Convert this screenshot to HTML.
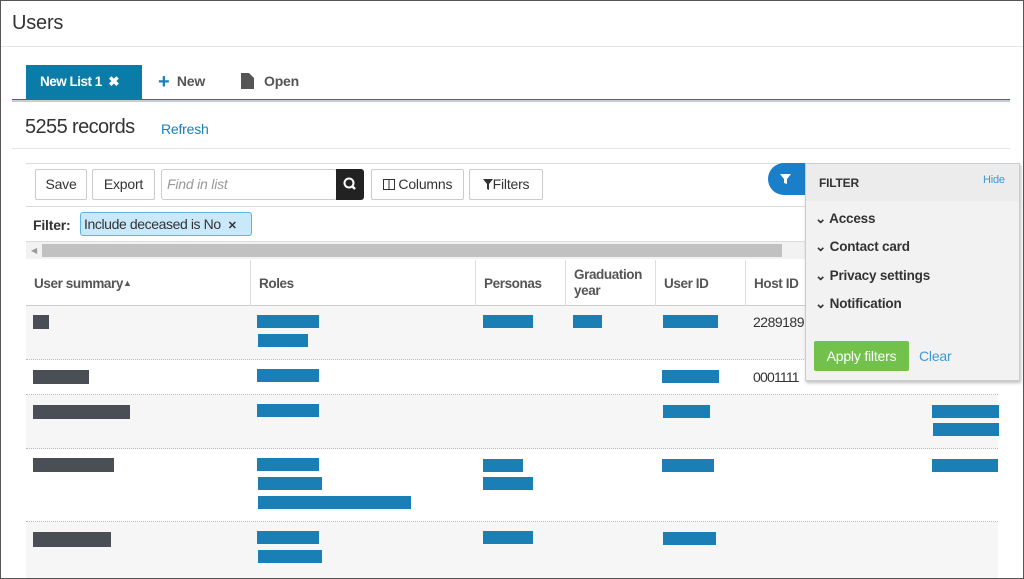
<!DOCTYPE html>
<html><head><style>
*{margin:0;padding:0;box-sizing:border-box}
body{width:1024px;height:579px;overflow:hidden;background:#fff;font-family:"Liberation Sans",sans-serif;position:relative;color:#333;letter-spacing:-0.2px}
.frame{position:absolute;left:0;top:0;width:1024px;height:579px;border:1px solid #555;z-index:50;pointer-events:none}
.a{position:absolute;white-space:nowrap}
.bar{position:absolute;height:13px;background:#1a7fb5}
.gbar{position:absolute;height:14px;background:#4a4f55}
.btn{position:absolute;top:169px;height:31px;border:1px solid #ccc;border-radius:2px;background:#fff;font-size:14px;line-height:29px;text-align:center;color:#333;white-space:nowrap}
.hd{position:absolute;top:260px;height:46px;font-weight:bold;font-size:13.5px;color:#555;border-left:1px solid #ddd;padding:7px 8px;display:flex;align-items:center;white-space:nowrap;letter-spacing:-0.4px}
.row{position:absolute;left:26px;width:972px;border-bottom:1px dotted #bbb}
.fi{position:absolute;left:815px;font-weight:bold;font-size:13.5px;color:#333;white-space:nowrap}
</style></head><body>
<div class="frame"></div>
<div class="a" style="left:12px;top:12px;font-size:20px;color:#333">Users</div>
<div class="a" style="left:1px;top:46px;width:1022px;height:1px;background:#e5e5e5"></div>

<div class="a" style="left:26px;top:65px;width:116px;height:34px;background:#0b7ca8;color:#fff;font-weight:bold;font-size:13.5px;line-height:34px;padding-left:14px;letter-spacing:-0.5px">New List 1 &nbsp;✖</div>
<div class="a" style="left:158px;top:73px;font-size:14px;font-weight:bold;color:#555"><span style="color:#1a7fb5;font-size:20px;line-height:16px;vertical-align:-2px">+</span>&nbsp; New</div>
<svg class="a" style="left:241px;top:73px" width="13" height="16"><path d="M0 0H8L13 5V16H0Z" fill="#555"/></svg>
<div class="a" style="left:264px;top:73px;font-size:14px;font-weight:bold;color:#555">Open</div>
<div class="a" style="left:12px;top:99px;width:998px;height:3px;background:#ccc;border-top:1px solid #0b7ca8"></div>

<div class="a" style="left:25px;top:116px;font-size:20px;color:#333;letter-spacing:-0.6px">5255 records</div>
<div class="a" style="left:161px;top:121px;font-size:14px;color:#1a7fb5">Refresh</div>
<div class="a" style="left:12px;top:148px;width:998px;height:1px;background:#e5e5e5"></div>

<div class="a" style="left:26px;top:163px;width:780px;height:1px;background:#ddd"></div>
<div class="btn" style="left:35px;width:52px">Save</div>
<div class="btn" style="left:92px;width:63px">Export</div>
<div class="btn" style="left:161px;width:176px;text-align:left;padding-left:5px;font-style:italic;color:#999;border-radius:3px">Find in list</div>
<div class="a" style="left:336px;top:169px;width:28px;height:31px;background:#222;border-radius:0 3px 3px 0"><svg width="28" height="31"><circle cx="13" cy="14" r="4.5" stroke="#fff" stroke-width="2" fill="none"/><path d="M16 17L19 20" stroke="#fff" stroke-width="2.5"/></svg></div>
<div class="btn" style="left:371px;width:93px"><svg width="12" height="11" style="vertical-align:-1px"><rect x="0.5" y="0.5" width="11" height="10" fill="none" stroke="#333"/><path d="M6 0V11" stroke="#333"/></svg> Columns</div>
<div class="btn" style="left:469px;width:74px"><svg width="10" height="11" style="vertical-align:-1px"><path d="M0 0H10L6 5V11L4 10V5Z" fill="#333"/></svg>Filters</div>
<div class="a" style="left:26px;top:206px;width:780px;height:1px;background:#ddd"></div>
<div class="a" style="left:768px;top:163px;width:40px;height:32px;background:#1a7fc8;border-radius:16px 0 0 16px"><svg width="40" height="32"><path d="M12 11H23L19 16V21L16 20V16Z" fill="#fff"/></svg></div>

<div class="a" style="left:33px;top:217px;font-size:14px;font-weight:bold;color:#333">Filter:</div>
<div class="a" style="left:80px;top:212px;width:172px;height:24px;background:#c9e9fa;border:1px solid #5bb5e5;border-radius:3px;font-size:14px;line-height:22px;padding-left:3px;color:#333;letter-spacing:-0.4px">Include deceased is No &nbsp;<b style="font-size:11px">✕</b></div>
<div class="a" style="left:26px;top:241px;width:780px;height:18px;background:#f2f2f2;border-top:1px solid #ddd"></div>
<div class="a" style="left:31px;top:246px;font-size:8px;color:#999">◀</div>
<div class="a" style="left:42px;top:244px;width:740px;height:13px;background:#c1c1c1"></div>

<div class="a" style="left:26px;top:305px;width:972px;height:1px;background:#ccc"></div>
<div class="hd" style="left:26px;width:224px;border-left:none">User summary <span style="font-size:9px">▲</span></div>
<div class="hd" style="left:250px;width:225px">Roles</div>
<div class="hd" style="left:475px;width:90px">Personas</div>
<div class="hd" style="left:565px;width:90px;line-height:16px">Graduation<br>year</div>
<div class="hd" style="left:655px;width:90px">User ID</div>
<div class="hd" style="left:745px;width:60px">Host ID</div>

<div class="row" style="top:306px;height:54px;background:#f6f6f6"></div>
<div class="row" style="top:360px;height:35px"></div>
<div class="row" style="top:395px;height:54px;background:#f6f6f6"></div>
<div class="row" style="top:449px;height:73px"></div>
<div class="row" style="top:522px;height:57px;background:#f6f6f6"></div>

<div class="gbar" style="left:33px;top:315px;width:16px"></div>
<div class="bar" style="left:257px;top:315px;width:62px"></div>
<div class="bar" style="left:258px;top:334px;width:50px"></div>
<div class="bar" style="left:483px;top:315px;width:50px"></div>
<div class="bar" style="left:573px;top:315px;width:29px"></div>
<div class="bar" style="left:663px;top:315px;width:55px"></div>
<div class="a" style="left:753px;top:314px;font-size:14px;color:#333;letter-spacing:-0.5px">2289189</div>

<div class="gbar" style="left:33px;top:370px;width:56px"></div>
<div class="bar" style="left:257px;top:369px;width:62px"></div>
<div class="bar" style="left:662px;top:370px;width:57px"></div>
<div class="a" style="left:753px;top:369px;font-size:14px;color:#333;letter-spacing:-0.8px">0001111</div>

<div class="gbar" style="left:33px;top:405px;width:97px"></div>
<div class="bar" style="left:257px;top:404px;width:62px"></div>
<div class="bar" style="left:663px;top:405px;width:47px"></div>
<div class="bar" style="left:932px;top:405px;width:67px"></div>
<div class="bar" style="left:933px;top:423px;width:66px"></div>

<div class="gbar" style="left:33px;top:458px;width:81px"></div>
<div class="bar" style="left:257px;top:458px;width:62px"></div>
<div class="bar" style="left:258px;top:477px;width:64px"></div>
<div class="bar" style="left:258px;top:496px;width:153px"></div>
<div class="bar" style="left:483px;top:459px;width:40px"></div>
<div class="bar" style="left:483px;top:477px;width:50px"></div>
<div class="bar" style="left:662px;top:459px;width:52px"></div>
<div class="bar" style="left:932px;top:459px;width:66px"></div>

<div class="gbar" style="left:33px;top:532px;width:78px;height:15px"></div>
<div class="bar" style="left:257px;top:531px;width:62px"></div>
<div class="bar" style="left:258px;top:550px;width:64px"></div>
<div class="bar" style="left:483px;top:531px;width:50px"></div>
<div class="bar" style="left:663px;top:532px;width:53px"></div>

<div class="a" style="left:805px;top:163px;width:215px;height:218px;background:#f2f2f2;border:1px solid #ccc;box-shadow:1px 2px 3px rgba(0,0,0,.25)">
<div style="height:37px;background:#ececec"></div></div>
<div class="a" style="left:819px;top:176px;font-size:12px;font-weight:bold;color:#333">FILTER</div>
<div class="a" style="left:983px;top:174px;font-size:11px;color:#3a9ad9">Hide</div>
<div class="fi" style="top:211px">⌄ Access</div>
<div class="fi" style="top:239px">⌄ Contact card</div>
<div class="fi" style="top:268px">⌄ Privacy settings</div>
<div class="fi" style="top:296px">⌄ Notification</div>
<div class="a" style="left:814px;top:341px;width:95px;height:30px;background:#72c14a;border-radius:2px;color:#fff;font-size:14px;line-height:30px;text-align:center">Apply filters</div>
<div class="a" style="left:919px;top:348px;font-size:14px;color:#3a9ad9">Clear</div>
</body></html>
